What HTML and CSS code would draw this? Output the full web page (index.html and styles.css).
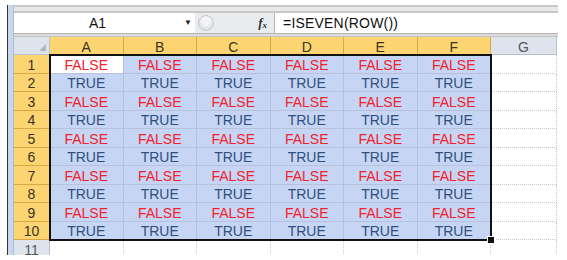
FILE: index.html
```html
<!DOCTYPE html>
<html lang="en">
<head>
    <meta charset="UTF-8">
    <title>ISEVEN</title>
    <link rel="stylesheet" href="styles.css">
</head>
<body>
    <div class="window">
        <div class="edge"></div>
        <div class="main">
            <div class="top-band"></div>

            <!-- Formula bar -->
            <div class="formula-bar">
                <div class="name-box">
                    <span class="name">A1</span>
                    <span class="drop">&#9660;</span>
                </div>
                <div class="bar-buttons">
                    <span class="round-btn"></span>
                    <span class="fx">f<sub>x</sub></span>
                </div>
                <div class="formula">=ISEVEN(ROW())</div>
            </div>
            <div class="divider"></div>

            <!-- Sheet grid -->
            <div class="sheet-wrap">
                <div class="sheet" id="sheet"></div>
                <div class="selection"></div>
            </div>
        </div>
    </div>

    <script>
        const sheet = document.getElementById('sheet');
        const cols = ['A', 'B', 'C', 'D', 'E', 'F', 'G'];

        function cell(cls, text) {
            const div = document.createElement('div');
            div.className = cls;
            div.textContent = text || '';
            sheet.appendChild(div);
        }

        // header row
        cell('corner');
        cols.forEach((c, i) => cell(i < 6 ? 'col-head active' : 'col-head', c));

        // rows 1 - 11
        for (let r = 1; r <= 11; r++) {
            const inRange = r <= 10;
            cell(inRange ? 'row-head active' : 'row-head', r);
            cols.forEach((c, i) => {
                if (inRange && i < 6) {
                    const even = r % 2 === 0;
                    let cls = 'cell sel ' + (even ? 'true' : 'false');
                    if (r === 1 && i === 0) cls += ' current';
                    cell(cls, even ? 'TRUE' : 'FALSE');
                } else {
                    cell('cell');
                }
            });
        }
    </script>
</body>
</html>
```

FILE: styles.css
```css
body {
    margin: 0;
    padding: 5px 0 0 7px;
    background: #fff;
    font-family: "Liberation Sans", Arial, sans-serif;
}
.window {
    display: flex;
    width: 550px;
    height: 250px;
    border-left: 1px solid #333;
    overflow: hidden;
}
.edge {
    width: 5px;
    flex-shrink: 0;
    background: #c9d7ec;
    border-right: 1px solid #b0bccc;
}
.main {
    flex: 1;
    display: flex;
    flex-direction: column;
}
.main > div {
    flex-shrink: 0;
}
.top-band {
    height: 4px;
    border-top: 2px solid #c8c8c8;
    border-bottom: 2px solid #c8c8c8;
    background: #e8e8e8;
}
.formula-bar {
    display: flex;
    height: 20px;
    background: #fff;
    font-size: 14px;
    color: #111;
}
.name-box {
    width: 181px;
    position: relative;
    display: flex;
    align-items: center;
    justify-content: center;
}
.name {
    margin-left: -14px;
}
.drop {
    position: absolute;
    right: 3px;
    top: 5px;
    font-size: 8px;
    color: #222;
}
.bar-buttons {
    width: 80px;
    display: flex;
    align-items: center;
    justify-content: space-between;
    padding: 0 7px 0 3px;
    box-sizing: border-box;
    background: #e9ecef;
    border-right: 1px solid #b8b8b8;
}
.round-btn {
    width: 16px;
    height: 16px;
    border-radius: 50%;
    border: 1px solid #c4c8ce;
    background: radial-gradient(circle at 50% 35%, #f4f4f4 0 30%, #dfe2e6 70%);
    box-sizing: border-box;
}
.fx {
    font-family: "Liberation Serif", serif;
    font-style: italic;
    font-weight: bold;
    font-size: 13px;
    color: #333;
}
.fx sub {
    font-size: 9px;
    vertical-align: -1px;
}
.formula {
    padding-left: 8px;
    line-height: 20px;
    letter-spacing: 0.2px;
}
.divider {
    height: 2px;
    background: #dcdcdc;
    border-top: 1px solid #b4b4b4;
    border-bottom: 1px solid #c4c4c4;
}
.sheet-wrap {
    position: relative;
}
.sheet {
    display: grid;
    grid-template-columns: 36px repeat(6, 73.5px) 66px;
    grid-template-rows: 18px repeat(10, 18.5px) 18px;
    font-size: 14px;
}
.sheet > div {
    display: flex;
    align-items: center;
    justify-content: center;
    box-sizing: border-box;
    overflow: hidden;
    padding-top: 2px;
}
.corner {
    background: #dde4ee;
    border-right: 1px solid #b8c0cc;
    border-bottom: 1px solid #b8c0cc;
    position: relative;
}
.corner::after {
    content: "";
    position: absolute;
    right: 3px;
    bottom: 3px;
    border-left: 7px solid transparent;
    border-bottom: 7px solid #b0b6bf;
}
.col-head {
    background: #dde4ee;
    color: #555;
    border-right: 1px solid #b8c0cc;
    border-bottom: 1px solid #b8c0cc;
}
.row-head {
    background: #dde4ee;
    color: #555;
    border-right: 1px solid #b8c0cc;
    border-bottom: 1px solid #c8d0da;
}
.col-head.active,
.row-head.active {
    background: #fcd472;
    color: #3a3320;
    border-right-color: #d9a844;
    border-bottom-color: #d9a844;
}
.cell {
    border-right: 1px dotted #c8c8c8;
    border-bottom: 1px dotted #c8c8c8;
}
.cell.sel {
    background: #c6d5f3;
    border-right: 1px solid #b6c2dc;
    border-bottom: 1px solid #b6c2dc;
}
.cell.current {
    background: #fff;
}
.false {
    color: #f3212b;
}
.true {
    color: #2f4f80;
}
.selection {
    position: absolute;
    left: 35px;
    top: 17px;
    width: 443px;
    height: 187px;
    border: 2px solid #111;
    box-sizing: border-box;
    pointer-events: none;
}
.selection::after {
    content: "";
    position: absolute;
    right: -5px;
    bottom: -5px;
    width: 6px;
    height: 6px;
    background: #111;
    border: 1px solid #fff;
}
```
